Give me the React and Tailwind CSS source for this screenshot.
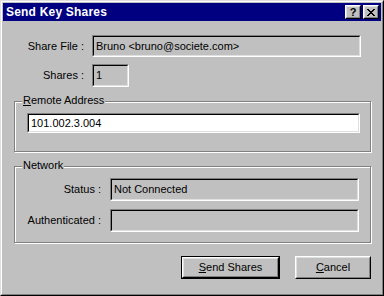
import React from 'react';

const font = { fontFamily: '"Liberation Sans", Arial, sans-serif' };

function Sunken({ className = '', inner = 'bg-[#c0c0c0]', children }) {
  return (
    <div className={`border border-t-[#808080] border-l-[#808080] border-b-white border-r-white ${className}`}>
      <div className={`h-full border border-t-black border-l-black border-b-[#dfdfdf] border-r-[#dfdfdf] ${inner} flex items-center pl-[2px] text-[11px] text-black leading-none`}>
        {children}
      </div>
    </div>
  );
}

function Raised({ className = '', children }) {
  return (
    <div className={`border border-t-white border-l-white border-b-black border-r-black ${className}`}>
      <div className="h-full border border-t-[#dfdfdf] border-l-[#dfdfdf] border-b-[#808080] border-r-[#808080] bg-[#c0c0c0] flex items-center justify-center">
        {children}
      </div>
    </div>
  );
}

function GroupBox({ label, className = '', children }) {
  return (
    <div className={`relative border border-[#808080] shadow-[inset_1px_1px_0_#fff,1px_1px_0_#fff] ${className}`}>
      <span className="absolute left-[7px] top-[-7px] bg-[#c0c0c0] px-[1px] text-[11px] leading-none text-black">{label}</span>
      {children}
    </div>
  );
}

export default function App() {
  return (
    <div style={font} className="w-[384px] h-[296px] bg-[#c0c0c0] border border-t-[#dfdfdf] border-l-[#dfdfdf] border-r-black border-b-black select-none">
      <div className="h-full border border-t-white border-l-white border-r-[#808080] border-b-[#808080] p-px flex flex-col">
        {/* Title bar */}
        <div className="h-[18px] bg-[#000080] flex items-center pl-[3px] pr-[2px]">
          <span className="text-white font-bold text-[12px] leading-none tracking-[0.2px]">Send Key Shares</span>
          <div className="ml-auto flex gap-[2px]">
            <Raised className="w-[16px] h-[14px]">
              <span className="text-black font-bold text-[11px] leading-none">?</span>
            </Raised>
            <Raised className="w-[16px] h-[14px]">
              <svg width="8" height="7" viewBox="0 0 8 7" shapeRendering="crispEdges">
                <path d="M0 0h2v1H0zM6 0h2v1H6zM1 1h2v1H1zM5 1h2v1H5zM2 2h4v1H2zM3 3h2v1H3zM2 4h4v1H2zM1 5h2v1H1zM5 5h2v1H5zM0 6h2v1H0zM6 6h2v1H6z" fill="#000" />
              </svg>
            </Raised>
          </div>
        </div>

        {/* Share file */}
        <div className="flex items-center mt-[14px]">
          <span className="w-[81px] text-right text-[11px] text-black">Share File :</span>
          <Sunken className="ml-[8px] w-[269px] h-[22px]">Bruno &lt;bruno@societe.com&gt;</Sunken>
        </div>
        <div className="flex items-center mt-[7px]">
          <span className="w-[81px] text-right text-[11px] text-black">Shares :</span>
          <Sunken className="ml-[8px] w-[37px] h-[23px]">1</Sunken>
        </div>

        {/* Remote address */}
        <GroupBox
          label={<><span className="underline">R</span>emote Address</>}
          className="mt-[14px] ml-[11px] w-[357px] h-[51px] pt-[11px] pl-[12px]"
        >
          <Sunken className="w-[333px] h-[20px]" inner="bg-white">101.002.3.004</Sunken>
        </GroupBox>

        {/* Network */}
        <GroupBox label="Network" className="mt-[14px] ml-[11px] w-[357px] h-[77px] pt-[11px]">
          <div className="flex items-center">
            <span className="w-[86px] text-right text-[11px] text-black">Status :</span>
            <Sunken className="ml-[9px] w-[249px] h-[23px]">Not Connected</Sunken>
          </div>
          <div className="flex items-center mt-[8px]">
            <span className="w-[86px] text-right text-[11px] text-black">Authenticated :</span>
            <Sunken className="ml-[9px] w-[249px] h-[23px]"></Sunken>
          </div>
        </GroupBox>

        {/* Buttons */}
        <div className="flex justify-end gap-[15px] mt-[13px] pr-[10px]">
          <div className="border border-black">
            <Raised className="w-[97px] h-[21px]">
              <span className="text-[11px] text-black leading-none"><span className="underline">S</span>end Shares</span>
            </Raised>
          </div>
          <Raised className="w-[76px] h-[23px]">
            <span className="text-[11px] text-black leading-none"><span className="underline">C</span>ancel</span>
          </Raised>
        </div>
      </div>
    </div>
  );
}
